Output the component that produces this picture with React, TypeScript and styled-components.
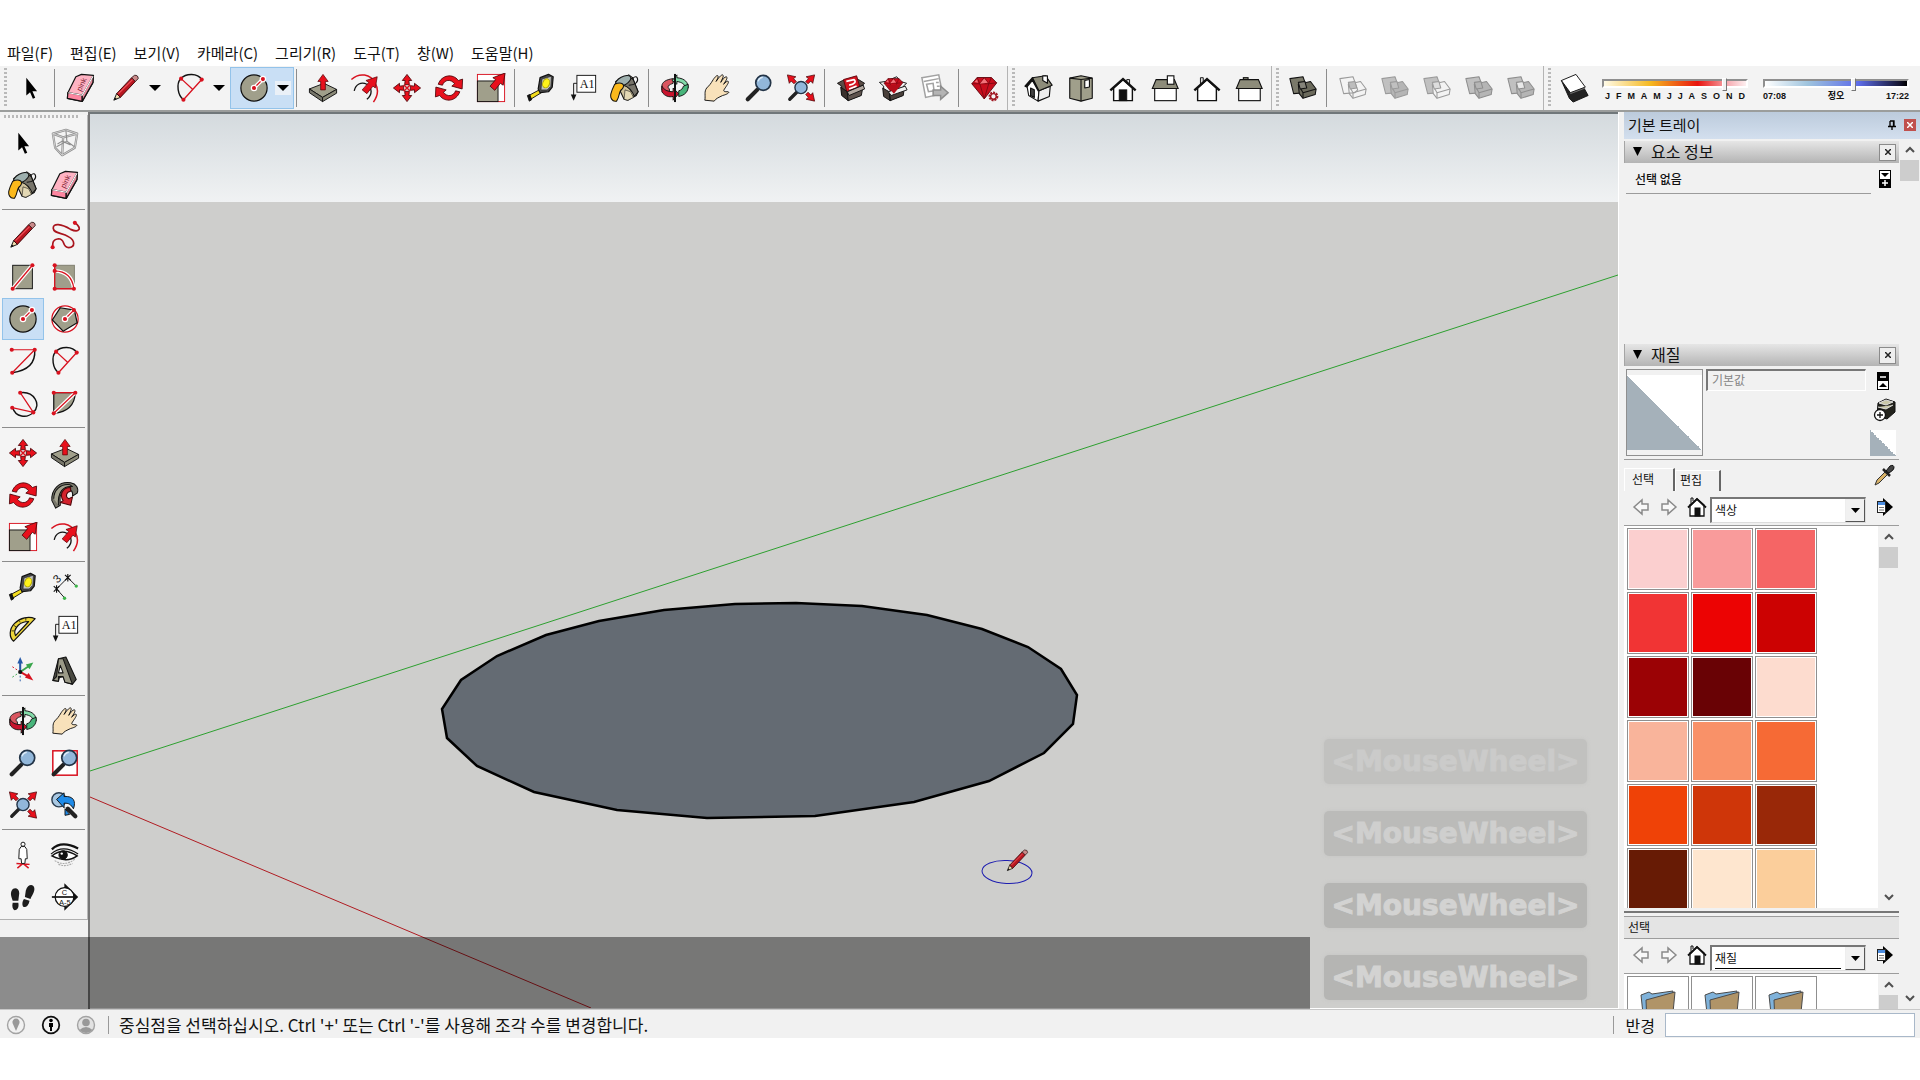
import React from "react";
import styled, { createGlobalStyle, css } from "styled-components";

const RED = "#d8121f";
const CLAY = "#a09f8b";
const INK = "#111";

const Global = createGlobalStyle`
  *, *::before, *::after { box-sizing: border-box; }
  html, body { margin: 0; background: #fff; }
  body, button, input, select {
    font-family: "Noto Sans CJK KR", "Liberation Sans", sans-serif;
    color: #111;
  }
  button { padding: 0; border: 0; background: none; }
  svg { display: block; }
`;

/* ---------- icon artwork, 32 x 32 ---------- */

const Dot = ({ x, y }: { x: number; y: number }) => <circle cx={x} cy={y} r="2.2" fill={RED} />;

const pencil = (
  <g strokeLinejoin="round">
    <path d="M3 29 L6 22 L10 26 Z" fill="#f0dcae" stroke={INK} />
    <path d="M6 22 L22 5 L26 9 L10 26 Z" fill="#b81620" stroke="#3a0508" />
    <path d="M8 22 L23 7" stroke="#f0545a" strokeWidth="1.2" />
    <path d="M22 5 L25 2.5 Q29 2 29 6 L26 9 Z" fill="#c98a8a" stroke="#3a2020" />
    <path d="M3 29 L4.4 26 L6.2 27.6 Z" fill={INK} />
  </g>
);
const eraser = (
  <g stroke={INK} strokeWidth="1.3" strokeLinejoin="round">
    <path d="M2 21 L10.5 4 L16.5 1.5 L29.3 2.5 L28.7 10.3 L17.3 30.3 L1.5 27 Z" fill="#ffb3c3" />
    <path d="M2 21 L17.3 23.7 L17.3 30.3 L1.5 27 Z" fill="#fd86a0" />
    <path d="M17.3 23.7 L29 3 L28.7 10.3 L17.3 30.3 Z" fill="#e78a9c" />
    <path d="M2.5 21 L17.3 23.7 L28.8 3.4" fill="none" stroke="#fff" strokeWidth="1.2" />
    <text x="0" y="0" transform="translate(16 20) rotate(-65)" fontSize="8" fontFamily="Liberation Sans" stroke="none" fill="#7a2030">pink</text>
  </g>
);
const push = (
  <g strokeLinejoin="round">
    <path d="M1.5 17 L17 11 L30.5 17.5 L15.5 26 Z" fill={CLAY} stroke={INK} />
    <path d="M1.5 17 L15.5 26 L15.5 30.5 L1.5 21 Z" fill="#77766a" stroke={INK} />
    <path d="M15.5 26 L30.5 17.5 L30.5 21.5 L15.5 30.5 Z" fill="#8b8a78" stroke={INK} />
    <path d="M16 1.5 L21.5 9 L18.5 9 L18.5 18 L13.5 18 L13.5 9 L10.5 9 Z" fill="#e8101c" stroke="#5a0508" strokeWidth=".8" />
  </g>
);
const offset = (
  <g fill="none" strokeWidth="1.6">
    <path d="M1.5 7 C10 -1 22 1 27 11 C31 18 30 24 25 31" stroke={RED} />
    <path d="M4.5 19 C6 12 12 9 18 12 C24 16 24 23 18 28" stroke={INK} strokeWidth="1.4" />
    <path d="M13 18 L20 10 L17 8 L29 4 L27 16 L24.5 14 L18 22 Z" fill="#e8101c" stroke="#5a0508" strokeWidth=".8" />
  </g>
);
const move = (
  <g fill="#e8101c" stroke="#4a0508" strokeWidth=".9" strokeLinejoin="round">
    {[0, 90, 180, 270].map((a) => (
      <path key={a} transform={`rotate(${a} 16 16)`} d="M16 1.5 L21 8 L18 8 L18.5 12.5 L13.5 12.5 L14 8 L11 8 Z" />
    ))}
    <path d="M12.5 12.5 L19.5 19.5 M19.5 12.5 L12.5 19.5" stroke={RED} strokeWidth="1.6" />
  </g>
);
const rotate = (
  <g fill="#e8101c" stroke="#4a0508" strokeWidth=".9" strokeLinejoin="round">
    {[0, 180].map((a) => (
      <path key={a} transform={`rotate(${a} 16 16)`} d="M4.5 12 C8 2 20 0 26 8 L30.5 6.5 L30 17 L19 14 L22 11.5 C18 6 11 7 9 13 Z" />
    ))}
  </g>
);
const scale = (
  <g>
    <rect x="1.5" y="1.5" width="29" height="29" fill="#fff" stroke={RED} />
    <rect x="1.5" y="8.5" width="22" height="22" fill={CLAY} stroke={INK} />
    <path d="M15 14 L21 7 L18 5 L31 0 L29 13 L26 11 L20 18.5 Z" fill="#e8101c" stroke="#4a0508" strokeWidth=".9" />
  </g>
);
const tape = (
  <g stroke={INK} strokeLinejoin="round">
    <path d="M3 24 L16 17 L18 20 L5 28 Z" fill="#f2dc1e" />
    <path d="M1.5 24 L4 23 L6 28.5 L3.5 30 Z" fill={INK} />
    <path d="M15 5 L24 1.5 L29 4 L28 15 L24 20 L15 21 L13 17 Z" fill="#4b4b4b" strokeWidth="1.3" />
    <path d="M17 6.5 L27 3.5 L26.5 14 L22.5 18 L16 18 Z" fill="#c4c4c4" strokeWidth=".6" />
    <ellipse cx="21.5" cy="11" rx="3.6" ry="5" fill="#fff21a" stroke="#b0a600" transform="rotate(20 21.5 11)" />
  </g>
);
const label = (
  <g>
    <rect x="9.5" y="2.5" width="20" height="18" fill="#fff" stroke={INK} />
    <text x="12.5" y="16" fontSize="13" fontFamily="Liberation Serif" fill={INK}>A1</text>
    <path d="M9.5 11 H6 V24" fill="none" stroke={INK} />
    <path d="M3 23 H9 L6 29.5 Z" fill={INK} />
  </g>
);
const bucket = (
  <g stroke={INK} strokeWidth="1.1" strokeLinejoin="round">
    <path d="M6 9 L20 2 L24 5 L30 20 L28 24 L19 29 L15 28 Z" fill="#cfc29c" />
    <path d="M14 13 L24 5 L30 20 L26 25 Q22 15 14 13 Z" fill="#77746a" />
    <path d="M15 28 L16 18 L22 20 L25 26 L19 29 Z" fill="#e3d8b4" strokeWidth=".6" />
    <ellipse cx="14" cy="8.5" rx="9" ry="4.5" fill="#9eb0ae" transform="rotate(-28 14 8.5)" />
    <path d="M20 13 C27 13 31 9 29 5 C28 3 25 4 24 7" fill="none" />
    <path d="M5 12 C12 9 17 12 13 17 C9 19 11 24 7 30 C2 31 0 26 1 22 C2 18 3 16 5 12 Z" fill="#fbb91c" />
  </g>
);
const orbit = (
  <g stroke={INK} strokeWidth="1" strokeLinejoin="round">
    <path d="M14 6 C6 7 2 10 2 14 L2 18 C4 21 6 22 10 23 L10 17 C9 16 8 15 9 14 C10 12 12 12 14 11 Z" fill="#d95660" />
    <path d="M2 14 L2 20 C5 25 10 26 14 25 L14 29 L20 22 L14 16 L14 20 C8 20 4 18 2 14 Z" fill="#c8142d" />
    <path d="M18 2 L13 8 L18 12 L18 9 C24 10 26 12 27 15 L30 16 C30 10 27 6 18 5 Z" fill="#83dba9" />
    <path d="M30 12 C31 20 26 24 20 25 L20 19 C23 18 24 17 25 14 Z" fill="#48b57b" />
    <path d="M16 1 V31" strokeWidth="2.2" />
  </g>
);
const hand = (
  <path
    d="M3 29 C4 24 2 20 5 16 C8 13 9 12 12 7 C14 4 16 2 17 3 C18 4 16 7 15 9 C18 5 20 2 22 2 C24 3 21 7 20 10 C22 7 24 4 26 4 C28 5 25 9 23 12 C25 10 27 8 28 9 C29 10 26 14 24 17 C22 20 24 20 28 20 C30 21 26 23 22 24 C18 26 15 27 13 30 Z"
    fill="#f8e1ba" stroke={INK} strokeWidth="1" strokeLinejoin="round"
  />
);
const lens = (
  <g>
    <path d="M4 28 L14 18" stroke="#222" strokeWidth="4.5" strokeLinecap="round" />
    <circle cx="20.5" cy="10.5" r="8" fill="#92b7da" stroke="#233447" strokeWidth="1.8" />
    <path d="M15 9 Q16 5 20 4.5" fill="none" stroke="#dcebf8" strokeWidth="1.5" />
  </g>
);
const corner = "M0 0 L9 2 L6.5 4 L9.5 7 L7 9.5 L4 6.5 L2 9 Z";
const extents = (
  <g>
    <path d="M4 28 L12 20" stroke="#222" strokeWidth="3.5" strokeLinecap="round" />
    <g fill="#e8101c" stroke="#4a0508" strokeWidth=".8">
      <path d={corner} transform="translate(1.5 2)" />
      <path d={corner} transform="translate(30.5 2) rotate(90)" />
      <path d={corner} transform="translate(30.5 30) rotate(180)" />
    </g>
    <circle cx="16" cy="15.5" r="6.5" fill="#92b7da" stroke="#233447" strokeWidth="1.5" />
  </g>
);
const crateBack = <path d="M6 14 L1.5 11 L7 8 L24 7 L30.5 11 L27 14 L26 24 L13 29 L6 23 Z" fill="#5b4c46" stroke={INK} strokeLinejoin="round" />;
const crateFront = (
  <g stroke={INK} strokeLinejoin="round">
    <path d="M5 15 L12 20 L13 29.500 L6 24 Z" fill="#39302c" />
    <path d="M12 20 L29 13 L27 24 L13 29.500 Z" fill="#5e534d" />
    <path d="M12 20 L29 13 L30.500 17 L14 24 Z" fill="#b3a8a0" />
  </g>
);
const gem = (s = "") => (
  <g transform={s} strokeLinejoin="round">
    <path d="M2 11 L8 4 L24 4 L30 10 L16 28 Z" fill="#c80d1d" stroke="#5c060d" />
    <path d="M2 11 L11 11 L16 28 M30 10 L21 11 L16 28 M11 11 L21 11 M8 4 L11 11 L16 4 L21 11 L24 4" fill="none" stroke="#7c0812" />
    <path d="M11 11 L16 5 L20 10 Z M5 9 L8 6 L9 10 Z" fill="#f2747c" />
  </g>
);
const house = (
  <g stroke={INK} strokeWidth="1.2" strokeLinejoin="round">
    <path d="M3 13 L9 6 L16 19 L15 30 L5 24 Z" fill="#fff" />
    <path d="M16 19 L28 14 L27 25 L15 30 Z" fill="#eee" />
    <path d="M9 5 L23 3 L30 13 L16 19 Z" fill="#8d8c7a" />
    <path d="M9 5 L1 14 L3 15 L9 8 L15 19 Z" fill={INK} />
    <path d="M20 3 H25 V11 L20 8 Z" fill="#fff" />
    <path d="M7 16 L11 18 V26 L7 24 Z" fill="#444" />
  </g>
);
const gable = (door: boolean) => (
  <g stroke={INK} strokeLinejoin="miter">
    <path d="M6 16 L16 7 L26 16 V29.5 H6 Z" fill="#fff" strokeWidth="1.5" />
    {door ? <path d="M20 10 V7 H23 V13" fill="#ddd" /> : <path d="M9 13 V5 H12 V9" fill="#ddd" />}
    <path d="M2.5 18.5 L16 6.5 L29.5 18.5" fill="none" strokeWidth="2.6" />
    {door && <rect x="12" y="18" width="8" height="11.5" fill={INK} />}
  </g>
);
const side = (tall: boolean) => (
  <g stroke={INK} strokeWidth="1.2">
    <rect x="5" y="15" width="23" height="14.5" fill="#fff" />
    {!tall && <rect x="10" y="5" width="5" height="4" fill="#8d8c7a" />}
    <path d="M2.5 16.5 L6.500 7 H26 L30 16.5 Z" fill="#8d8c7a" />
    {tall && <rect x="18.5" y="3" width="7" height="9" fill="#fff" />}
  </g>
);
const solids = (a: string, b: string, mid: string, line: string) => (
  <g stroke={line} strokeLinejoin="round" strokeWidth="1.1">
    <path d="M2 6 L16 4 L21 18 L18 21 L6 22 Z" fill={a} />
    <path d="M11 12 L24 9 L30 17 L29 23 L16 27 L12 22 Z" fill={b} />
    <path d="M30 17 L16 21 L11 12 M16 21 V27" fill="none" />
    <path d="M11 10 L18 9 L20 16 L13 17 Z" fill={mid} />
  </g>
);

const icons: Record<string, React.ReactNode> = {
  select: <path d="M11 5 V24 L15 20.5 L18 27.5 L20.5 26.5 L17.5 19.5 H22.5 Z" fill="#000" />,
  component: (
    <g fill="none" stroke="#8e8e8e" strokeWidth="2.4" strokeLinejoin="round">
      <path d="M3 6 L17 2 L29 6 L26.5 21 L13 29 L5.5 21 Z M3 6 L14 10 L29 6 M14 10 L13 29" />
      <path d="M3 6 L17 2 L29 6 L26.5 21 L13 29 L5.5 21 Z M3 6 L14 10 L29 6 M14 10 L13 29" stroke="#e3e3e3" strokeWidth=".8" />
      <path d="M8 17 L13 14 L22 18 M17 3 L18 14 L26 20 M18 14 L7 20" strokeWidth="1.2" />
    </g>
  ),
  bucket, eraser, pencil, push, offset, move, rotate, scale, tape, label, orbit, hand, lens, extents, house,
  freehand: (
    <g>
      <path d="M26.5 3 C35 9 31 14 22 10 C12 4 3 3 3.5 9 C4 15 13 13 20 18 C27 22 27 29 20 29.5 C12 29 17 20 9 20 C2 21 3 25 2.8 29" fill="none" stroke="#a9141d" strokeWidth="1.8" />
      <Dot x={26.5} y={3} /><Dot x={2.8} y={29} />
    </g>
  ),
  rectangle: (
    <g>
      <rect x="5" y="3.5" width="21" height="25" fill={CLAY} stroke={INK} />
      <path d="M5 28.5 L26 3.5" stroke="#fff" strokeWidth="4" /><path d="M5 28.5 L26 3.5" stroke={RED} strokeWidth="1.4" />
      <Dot x={5} y={28.5} /><Dot x={26} y={3.5} />
    </g>
  ),
  rotrect: (
    <g>
      <rect x="5" y="3.5" width="21" height="25" fill={CLAY} stroke="#7d7c6c" />
      <path d="M5 9.5 Q23 10 25.5 28.5" fill="none" stroke="#fff" strokeWidth="4" />
      <path d="M5 3.5 V28.5 H25.5 Q23 10 5 9.5" fill="none" stroke={RED} strokeWidth="1.4" />
      <Dot x={5} y={3.5} /><Dot x={5} y={9.5} /><Dot x={5} y={28.5} /><Dot x={25.5} y={28.5} />
    </g>
  ),
  circle: (
    <g>
      <circle cx="16" cy="16" r="14" fill={CLAY} stroke={INK} strokeWidth="1.3" />
      <path d="M16 16 L25.5 6.5" stroke="#fff" strokeWidth="4" /><path d="M16 16 L25.5 6.5" stroke={RED} strokeWidth="1.4" />
      <circle cx="16" cy="16" r="3.5" fill="#fff" /><circle cx="25.5" cy="6.5" r="3.5" fill="#fff" />
      <Dot x={16} y={16} /><Dot x={25.5} y={6.5} />
    </g>
  ),
  polygon: (
    <g>
      <circle cx="16" cy="16" r="14" fill="#fff" stroke={RED} strokeWidth="1.3" />
      <path d="M11 4 L26 6.5 L29 20 L14 29 L2.5 17 Z" fill={CLAY} stroke={INK} strokeWidth="1.3" />
      <path d="M16 16 L25.5 6.5" stroke="#fff" strokeWidth="4" /><path d="M16 16 L25.5 6.5" stroke={RED} strokeWidth="1.4" />
      <circle cx="16" cy="16" r="3.5" fill="#fff" />
      <Dot x={16} y={16} /><Dot x={25.5} y={6.5} />
    </g>
  ),
  arc: (
    <g fill="none">
      <path d="M28.5 4 Q30 25 4.5 28.5" stroke={INK} strokeWidth="1.5" />
      <path d="M4 4 H28.5 L4.5 28.5" stroke={RED} strokeWidth="1.3" />
      <Dot x={4} y={4} /><Dot x={28.5} y={4} /><Dot x={4.5} y={28.5} />
    </g>
  ),
  arc2: (
    <g fill="none">
      <path d="M28.5 7 C24 0 12 0 6 6 C1 12 3 24 9 28.5" stroke={INK} strokeWidth="1.5" />
      <path d="M28.5 7 L9 28.5 M6.5 6 L19 17.5" stroke={RED} strokeWidth="1.4" />
      <Dot x={6.5} y={6} /><Dot x={28.5} y={7} /><Dot x={9} y={28.5} />
    </g>
  ),
  arc3: (
    <g fill="none">
      <path d="M13 5 C28 3 36 18 27 26 C20 33 8 31 5 21" stroke={INK} strokeWidth="1.5" />
      <path d="M13 5 L27 26 L4.5 21" stroke={RED} strokeWidth="1.3" />
      <Dot x={13} y={5} /><Dot x={27} y={26} /><Dot x={4.5} y={21} />
    </g>
  ),
  pie: (
    <g>
      <path d="M4 5 H27 Q26 25 4 27 Z" fill={CLAY} stroke={INK} strokeWidth="1.3" />
      <path d="M4 27 L27 5" stroke="#fff" strokeWidth="4" /><path d="M4 27 L27 5 H4" fill="none" stroke={RED} strokeWidth="1.4" />
      <Dot x={4} y={5} /><Dot x={27} y={5} /><Dot x={4} y={27} />
    </g>
  ),
  follow: (
    <g stroke={INK} strokeWidth="1.1" strokeLinejoin="round">
      <path d="M2 22 C1 10 10 1 22 3 C28 4 31 9 29 14 L24 17 C25 11 20 8 15 11 C9 15 11 21 11 27 L6 30 Z" fill="#77766a" />
      <path d="M4 20 C4 11 11 4 21 5 L24 7 C14 6 8 13 9 27" fill="#a4a390" />
      <path d="M22 8 C13 8 10 16 14 22 L11 24 L22 27 L24 18 L20 20 C16 18 17 13 22 12 Z" fill="#d3222c" stroke="#4a0508" />
    </g>
  ),
  dimension: (
    <g stroke={INK} fill="none">
      <path d="M7 18 L19 6 M7 18 L15 27 M19 6 L27 14" />
      <path d="M4 15 L10 21 M10 15 L4 21 M7 14 V22 M16 3 L22 9 M22 3 L16 9 M19 2 V10" strokeWidth="1.2" />
      <text x="4" y="11" transform="rotate(-45 8 7)" fontSize="12" fontFamily="Liberation Sans" fill={INK} stroke="none">3</text>
      <circle cx="15.5" cy="28" r="1.8" fill="#3db54a" stroke="none" /><circle cx="28" cy="15" r="1.8" fill="#3db54a" stroke="none" />
    </g>
  ),
  protractor: (
    <g stroke={INK} strokeWidth="1.3" strokeLinejoin="round">
      <path d="M29 5 L6 29 C1 25 1 16 7 10 C13 4 22 2 29 5 Z" fill="#ecd53a" />
      <path d="M22 8 L8 23 C6 19 8 15 11 12 C14 9 18 8 22 8 Z" fill="#f3f3f3" />
      <path d="M4 18 L7 18 M6 12 L9 14 M12 7 L13 9 M19 4 V7" strokeWidth=".8" />
    </g>
  ),
  axes: (
    <g>
      <path d="M13 17 V6" stroke="#2559a8" strokeWidth="2.2" /><path d="M13 1 L16 8 H10 Z" fill="#2559a8" />
      <path d="M13 17 L22 11" stroke="#3aa64c" strokeWidth="2" /><path d="M27 7 L23 14 L19 9 Z" fill="#3aa64c" />
      <path d="M13 17 L22 22" stroke={RED} strokeWidth="2" /><path d="M27 26 L18 23 L22 18 Z" fill={RED} />
      <path d="M13 17 L4 11" stroke={RED} strokeDasharray="2 2" /><path d="M13 17 V28" stroke="#2559a8" strokeDasharray="2 2" /><path d="M13 17 L4 23" stroke="#3aa64c" strokeDasharray="2 2" />
      <circle cx="13" cy="17" r="2.2" fill={INK} />
    </g>
  ),
  text3d: (
    <g stroke={INK} strokeLinejoin="round" strokeWidth="1.1">
      <path d="M9 3 L17 1 L28 25 L24 30 L16 28 L14 22 L10 23 L9 27 L3 26 Z" fill="#4a4a42" />
      <path d="M9 3 L14 3 L22 25 L24 30 L16 28 L14 22 L9 22 L9 27 L3 26 L7 22 Z" fill="#9b9a88" />
      <path d="M11 10 L14 18 L9 18 Z" fill="#f1f1f1" />
    </g>
  ),
  zoomwin: (<g><rect x="3" y="3" width="26" height="26" fill="#fff" stroke={RED} strokeWidth="1.6" />{lens}</g>),
  previous: (
    <g strokeLinejoin="round">
      <circle cx="9.5" cy="10.5" r="7.5" fill="#a9c8e2" stroke="#2b3d50" strokeWidth="1.5" />
      <path d="M19 20 L27 28" stroke="#222" strokeWidth="4.5" strokeLinecap="round" />
      <path d="M7 10 L15 3 L15 7 C25 6 28 12 25 20 C22 15 20 14 15 14 L15 19 Z" fill="#1f8be8" stroke={INK} />
      <path d="M16 20 L21 26 L16 27 Z" fill="#1f8be8" stroke={INK} />
    </g>
  ),
  camera: (
    <g fill="none" stroke={INK}>
      <path d="M10 30 L16 25 L22 30 M9 25 L23 26" stroke={RED} strokeWidth="1.6" />
      <circle cx="16" cy="4.5" r="2.2" fill="#fff" />
      <path d="M14 7 L12 10 L11.5 20 H14 L14.5 25 H18 L18.5 20 H20.5 L20 10 L18 7 Z" fill="#fff" />
    </g>
  ),
  eye: (
    <g fill="none" stroke={INK}>
      <path d="M2 10 Q12 0 30 9" strokeWidth="2.4" /><path d="M2 17 Q14 7 29 17 Q18 25 2 17 Z" fill="#fff" strokeWidth="1.5" />
      <path d="M1 15 Q14 4 30 15" strokeWidth="1.2" />
      <circle cx="14" cy="16" r="4.5" fill={INK} /><circle cx="12.5" cy="14.5" r="1.3" fill="#fff" stroke="none" />
      <path d="M5 22 Q16 29 27 20 M9 26 Q17 29 24 25" stroke="#aaa" strokeWidth="1.2" strokeDasharray="2 1" />
    </g>
  ),
  walk: (
    <g fill="#1c1c1c">
      <path d="M4 9 C6 5 12 6 12 12 L11 20 L5 20 C4 16 2 13 4 9 Z M5 22 L11 22 C12 27 10 30 7 30 C5 29 4 26 5 22 Z" />
      <path d="M19 9 C21 2 27 2 28 6 C29 10 25 15 24 18 L18 16 Z M17 18 L23 20 C22 26 18 28 16 26 C15 24 15 21 17 18 Z" />
    </g>
  ),
  section: (
    <g fill="none" stroke={INK} strokeWidth="1.4">
      <path d="M16 3 L29 16 L16 29 Z" fill={INK} />
      <circle cx="15.5" cy="16" r="10" fill="#fff" />
      <path d="M2 16 H29" strokeWidth="1.8" />
      <g fontSize="8" fontFamily="Liberation Sans" fill={INK} stroke="none"><text x="12.5" y="14">C</text><text x="9.500" y="24">A-5</text></g>
    </g>
  ),
  warehouse: (
    <g>{crateBack}
      <path d="M8 7 L22 3 L26 17 L12 22 Z" fill="#d3131f" stroke="#5c060d" />
      <path d="M11 9 L19 7 C22 9 20 12 14 13 M14 17 L22 14" stroke="#fff" strokeWidth="1.8" fill="none" />
      {crateFront}
    </g>
  ),
  extwarehouse: (
    <g>
      <path d="M6 14 L1.5 10 L8 9 L20 4 L24 9 L30.500 11 L27 14 L26 24 L13 29 L6 23 Z" fill="#f6f6f6" stroke={INK} strokeLinejoin="round" />
      {gem("translate(5 3) scale(.72)")}
      <path d="M5 16 L12 20 L13 29.500 L6 25 Z M12 20 L28 15 L27 24 L13 29.500 Z" fill="#4a403b" stroke={INK} />
      <path d="M11 20 L29 14 L31 18 L14 24 Z" fill="#f0f0f0" stroke={INK} />
      <path d="M9 13 L25 12 L17 22 Z" fill="#b50d1a" />
    </g>
  ),
  layout: (
    <g stroke="#a2a2a2" fill="#fff" strokeWidth="1.6">
      <path d="M2 5 L20 2 L24 22 L6 26 Z" /><path d="M4 9 L20 6 M7 12 L14 11 L15 19 L9 20 Z M17 10 H20 M18 14 H21" />
      <path d="M14 18 H22 V14 L30 21 L22 28 V24 H14 Z" fill="#b4b4b4" stroke="#8d8d8d" />
    </g>
  ),
  extmanager: (<g>{gem("translate(0 1) scale(.95)")}<circle cx="25" cy="25" r="4" fill="#f3f3f3" stroke="#a01822" strokeWidth="2.5" strokeDasharray="2 1" /><circle cx="25" cy="25" r="3" fill="none" stroke="#a01822" strokeWidth="1.5" /></g>),
  top: (
    <g stroke={INK} strokeLinejoin="round" strokeWidth="1.2">
      <path d="M4 5.5 L16 3 L28 5.5 V27 L16 30 L4 27 Z" fill={CLAY} /><path d="M16 7 V30 M4 5.5 L16 7 L28 5.5" fill="none" />
      <path d="M20 8 L25 7 V15 L20 16 Z" fill="#fff" />
    </g>
  ),
  front: gable(true),
  right: side(true),
  back: gable(false),
  left: side(false),
  outer: solids("#7a796a", "#6b6a5c", "#85847a", INK),
  intersect: solids("none", "none", "#bdbdbd", "#9a9a9a"),
  union: solids("#c0c0c0", "#b5b5b5", "#c0c0c0", "#9a9a9a"),
  subtract: solids("#c0c0c0", "#f3f3f3", "#ddd", "#9a9a9a"),
  trim: solids("#c0c0c0", "#b5b5b5", "#b5b5b5", "#8e8e8e"),
  split: solids("#c0c0c0", "#b5b5b5", "#e9e9e9", "#8e8e8e"),
  shadow: (
    <g strokeLinejoin="round">
      <path d="M1.5 8 L10 27 L14 31 L30 24 L25 15 Z" fill="#222" stroke="#111" />
      <path d="M1.5 8 L17 1.5 L27 15 L11 21 Z" fill="#fff" stroke="#111" />
      <path d="M11 22 L27 16" stroke="#777" />
    </g>
  ),
  prev: <path d="M9 16 L17 9 V13 H23 V19 H17 V23 Z" fill="#f8f8f8" stroke="#8a8a8a" strokeWidth="1.5" />,
  next: <path d="M23 16 L15 9 V13 H9 V19 H15 V23 Z" fill="#f8f8f8" stroke="#8a8a8a" strokeWidth="1.5" />,
  home: (
    <g stroke={INK}>
      <path d="M10 14 L16 8 L23 14 V25 H9 V14 Z" fill="#fff" strokeWidth="1.3" /><path d="M10 13 V7 H12 V10" fill="none" />
      <path d="M7 16.5 L16 8 L25 16.5" fill="none" strokeWidth="1.8" /><rect x="14" y="17" width="5" height="8" fill={INK} />
    </g>
  ),
  details: (
    <g><path d="M15 7 L25 16 L15 25 Z" fill="#000" /><rect x="9.5" y="10.5" width="8" height="11" fill="#fff" stroke="#222" /><path d="M10 12.5 H17" stroke="#4c8de0" strokeWidth="3" /><path d="M11 16.5 H16 M11 19 H16" stroke="#777" /></g>
  ),
  dropper: (
    <g strokeLinejoin="round"><path d="M7 26 L9 21 L18 12 L20.5 14.5 L11 24 Z" fill="#d8b268" stroke="#333" /><path d="M15 10 L22 17" stroke="#222" strokeWidth="2.5" /><path d="M18 12 L22 7 Q26 5 26 9 Q26 11 21 14 Z" fill="#444" stroke="#111" /></g>
  ),
  addmat: (
    <g stroke={INK} strokeLinejoin="round"><path d="M9 9 L17 5 L26 8 V18 L18 25 L8 22 Z" fill="#22221c" /><path d="M10 9 L17 6 L24 8 L17 11 Z M9 13 L17 15 L24 11" fill="#c9c7a8" stroke="#ddd" /><circle cx="11" cy="21" r="5.5" fill="#fff" strokeWidth="1.3" /><path d="M8 21 H14 M11 18 V24" strokeWidth="1.3" /></g>
  ),
};

const Icon = ({ name, size = 30 }: { name: string; size?: number }) => (
  <svg width={size} height={size} viewBox="0 0 32 32" aria-hidden="true">{icons[name]}</svg>
);

/* ---------- frame ---------- */

const Page = styled.div`
  display: flex;
  flex-direction: column;
  height: 100vh;
  padding: 40px 0 42px;
  background: #fff;
`;
const MenuBar = styled.nav`
  display: flex;
  flex: none;
  gap: 17px;
  height: 26px;
  padding-left: 7px;
`;
const MenuItem = styled.button`
  font-size: 15px;
  line-height: 26px;
  white-space: nowrap;
`;
const Toolbar = styled.div`
  display: flex;
  flex: none;
  align-items: stretch;
  height: 46px;
  background: #f3f3f3;
  border-bottom: 2px solid #9b9d9c;
`;
const Group = styled.div`
  display: flex;
  align-items: center;
  padding-right: 1px;
  border-right: 1px solid #b4b4b4;
`;
const Grip = styled.span<{ $wide?: boolean }>`
  ${(p) => p.$wide
    ? css`display: block; height: 3px; margin: 3px 6px 4px 2px; background: repeating-linear-gradient(90deg, #b9b9b9 0 2px, transparent 2px 4px);`
    : css`width: 3px; height: 40px; margin: 0 3px 0 4px; background: repeating-linear-gradient(180deg, #b9b9b9 0 2px, transparent 2px 4px);`}
`;
const Tool = styled.button<{ $on?: boolean }>`
  display: grid;
  place-items: center;
  width: 42px;
  height: 42px;
  border: 1px solid ${(p) => (p.$on ? "#93c3ea" : "transparent")};
  background: ${(p) => (p.$on ? "#c9dff5" : "transparent")};
`;
const Split = styled.div<{ $on?: boolean }>`
  display: flex;
  align-items: center;
  width: 64px;
  height: 42px;
  padding-left: 2px;
  border: 1px solid ${(p) => (p.$on ? "#93c3ea" : "transparent")};
  background: ${(p) => (p.$on ? "#c9dff5" : "transparent")};
`;
const SplitMain = styled.button`
  display: grid;
  place-items: center;
  width: 42px;
`;
const SplitArrow = styled.button<{ $on?: boolean }>`
  display: grid;
  place-items: center;
  width: 16px;
  height: 14px;
  background: ${(p) => (p.$on ? "#eaf0f7" : "transparent")};
`;
const Divider = styled.span`
  width: 1px;
  height: 38px;
  margin: 0 5px 0 2px;
  background: #8c8c8c;
`;
const ShadowBar = styled.div`
  display: flex;
  flex: 1;
  align-items: center;
`;
const ShadowPanel = styled.div`
  display: flex;
  align-items: center;
  gap: 15px;
  margin-left: auto;
  padding: 2px 11px 0 0;
`;
const RangeBlock = styled.div`
  display: flex;
  flex-direction: column;
  width: 146px;
  font: bold 9px/12px "Liberation Sans", "Noto Sans CJK KR", sans-serif;
`;
const Range = styled.input<{ $track: string }>`
  appearance: none;
  width: 100%;
  height: 13px;
  margin: 0;
  background: none;
  &::-webkit-slider-runnable-track {
    height: 9px;
    border: 2px solid;
    border-color: #8f8f8f #fff #fff #8f8f8f;
    background: linear-gradient(90deg, ${(p) => p.$track});
  }
  &::-webkit-slider-thumb {
    appearance: none;
    width: 5px;
    height: 13px;
    margin-top: -3px;
    border: 1px solid;
    border-color: #fff #777 #777 #fff;
    background: #f1f1f1;
  }
`;
const Ticks = styled.div`
  display: flex;
  justify-content: space-between;
  padding: 0 3px;
`;
const Times = styled(Ticks)`
  padding: 0;
`;

const Workspace = styled.div`
  position: relative;
  display: flex;
  flex: 1;
  min-height: 0;
  background: #f1f1f1;
`;
const ToolBox = styled.aside`
  width: 90px;
  flex: none;
  overflow: hidden;
  border-right: 2px solid #777;
`;
const ToolGrid = styled.div`
  width: 88px;
  padding: 0 2px 1px;
  background: #f4f4f4;
  border-right: 1px solid #b8b8b8;
  border-bottom: 1px solid #b0b0b0;
`;
const ToolSet = styled.div`
  display: grid;
  grid-template-columns: 42px 42px;
  & + & {
    margin-top: 3px;
    padding-top: 4px;
    border-top: 1px solid #8c8c8c;
  }
`;
const Viewport = styled.main`
  position: relative;
  flex: 1;
  min-width: 0;
  border-top: 2px solid #70777a;
  border-bottom: 1px solid #fff;
  background: #cececc;
`;
const Scene = styled.svg`
  width: 100%;
  height: 100%;
`;
const KeyLog = styled.div`
  position: absolute;
  right: 31px;
  bottom: 8px;
  display: flex;
  flex-direction: column;
  gap: 27px;
`;
const KeyBadge = styled.div<{ $level: number }>`
  width: 263px;
  border-radius: 5px;
  text-align: center;
  font: bold 28px/45px "DejaVu Sans", sans-serif;
  -webkit-text-stroke: 1px currentColor;
  color: ${(p) => ["#cbcbca", "#cfcfce", "#d3d3d2", "#d3d3d2"][p.$level]};
  background: ${(p) => ["#c1c1bf", "#bbbbb9", "#b5b5b3", "#b5b5b3"][p.$level]};
  box-shadow: 0 0 4px #c4c4c2;
`;
const Shade = styled.div`
  position: absolute;
  left: 0;
  bottom: 0;
  width: 68.23%;
  height: 72px;
  background: rgba(0, 0, 0, 0.42);
`;

/* ---------- tray ---------- */

const Tray = styled.aside`
  display: flex;
  flex-direction: column;
  flex: none;
  width: 302px;
  padding-left: 5px;
  overflow: hidden;
  border-left: 1px solid #fff;
`;
const TrayTitle = styled.header`
  display: flex;
  align-items: center;
  flex: none;
  height: 27px;
  padding: 0 4px 2px 4px;
  background: linear-gradient(#bccbdc, #d3dfee);
  font-size: 15px;
  line-height: 22px;
`;
const Grow = styled.span`
  flex: 1;
`;
const TrayClose = styled.button`
  display: grid;
  place-items: center;
  width: 12px;
  height: 12px;
  margin-left: 8px;
  background: #c0504d;
`;
const TrayBody = styled.div`
  display: flex;
  flex: 1;
  min-height: 0;
`;
const Sections = styled.div`
  flex: 1;
  overflow: hidden;
  padding-top: 2px;
`;
const SectionHead = styled.h2`
  display: flex;
  align-items: center;
  height: 22px;
  margin: 0;
  padding: 0 3px 0 8px;
  border-left: 1px solid #a5a5a5;
  background: linear-gradient(#e6e6e6, #b4b4b4);
  font-size: 16px;
  font-weight: 400;
`;
const HeadToggle = styled.button`
  display: flex;
  align-items: center;
  gap: 9px;
  padding-bottom: 2px;
  font-size: 16px;
  line-height: 20px;
`;
const HeadClose = styled.button`
  display: grid;
  place-items: center;
  width: 17px;
  height: 17px;
  border: 1px solid #8b8b8b;
  background: #eee;
`;
const Info = styled.div`
  display: flex;
  height: 181px;
  padding: 4px 8px 0 2px;
`;
const InfoText = styled.p`
  flex: 1;
  height: 27px;
  margin: 0 8px 0 0;
  padding-left: 9px;
  border-bottom: 1px solid #9c9c9c;
  font-size: 12px;
  font-weight: 500;
  line-height: 24px;
`;
const FlipBox = styled.div`
  padding-top: 3px;
`;
const Flip = styled.button<{ $up?: boolean }>`
  display: flex;
  flex-direction: ${(p) => (p.$up ? "column-reverse" : "column")};
  width: 12px;
  height: 18px;
  border: 1px solid #000;
  background: #fff;
  svg:last-child { background: #000; }
`;
const MaterialHead = styled.div`
  display: flex;
  height: 94px;
  padding: 3px 2px 0;
  gap: 3px;
  border-bottom: 1px solid #9c9c9c;
`;
const Preview = styled.div`
  width: 77px;
  height: 87px;
  padding: 5px 0;
  border: 1px solid #8f8f8f;
`;
const Fold = styled.span<{ $small?: boolean }>`
  display: block;
  width: ${(p) => (p.$small ? "26px" : "100%")};
  height: ${(p) => (p.$small ? "26px" : "100%")};
  background: linear-gradient(to top right, #a5b1ba 50%, #fff 50%);
`;
const NameField = styled.input`
  flex: 1;
  min-width: 0;
  height: 22px;
  padding: 0 4px 2px;
  border: 1px solid;
  border-width: 2px 1px 1px 2px;
  border-color: #777 #fff #fff #777;
  background: #f1f1f1;
  font-size: 12px;
  &::placeholder { color: #858585; }
`;
const MaterialActions = styled.div`
  display: flex;
  flex-direction: column;
  align-items: center;
  gap: 4px;
  width: 28px;
  padding-top: 3px;
`;
const IconButton = styled.button`
  display: grid;
  place-items: center;
  flex: none;
  width: 28px;
  height: 32px;
`;
const Tabs = styled.div`
  display: flex;
  align-items: flex-end;
  height: 31px;
  padding-right: 3px;
`;
const Tab = styled.button<{ $on?: boolean }>`
  width: ${(p) => (p.$on ? 51 : 46)}px;
  height: ${(p) => (p.$on ? 23 : 21)}px;
  padding: 0 0 3px ${(p) => (p.$on ? 7 : 4)}px;
  border-top: 1px solid #fff;
  border-left: 1px solid #fff;
  border-right: 2px solid #666;
  text-align: left;
  font-size: 12px;
  line-height: 16px;
`;
const NavRow = styled.div`
  display: flex;
  align-items: flex-start;
  height: 35px;
  border-bottom: 1px solid #9c9c9c;
  padding-left: 1px;
`;
const SelectBox = styled.label`
  display: flex;
  width: 156px;
  height: 26px;
  margin: 6px 2px 0 1px;
  border: 1px solid;
  border-width: 2px 1px 1px 2px;
  border-color: #777 #ddd #ddd #777;
  background: #fff;
`;
const Select = styled.select<{ $focus?: boolean }>`
  appearance: none;
  flex: 1;
  margin: 0 4px 1px 3px;
  padding: 0;
  border: 0;
  border-bottom: 1px solid ${(p) => (p.$focus ? "#000" : "transparent")};
  background: none;
  font-size: 12px;
`;
const SelectArrow = styled.span`
  display: grid;
  place-items: center;
  width: 20px;
  border: 1px solid;
  border-color: #eee #555 #555 #eee;
  background: #f1f1f1;
`;
const ListRow = styled.div<{ $h: number }>`
  display: flex;
  height: ${(p) => p.$h}px;
  background: #fff;
  overflow: hidden;
`;
const Swatches = styled.div`
  display: grid;
  grid-template-columns: repeat(3, 62px);
  grid-auto-rows: 62px;
  align-content: start;
  gap: 2px;
  flex: 1;
  padding: 2px 3px;
`;
const Swatch = styled.button<{ $c: string }>`
  border: 1px solid #8f8f8f;
  padding: 1px;
  background: ${(p) => p.$c} content-box;
  svg { margin: 0 auto; }
`;
const Bar = styled.div<{ $thumb: number }>`
  display: flex;
  flex-direction: column;
  align-items: center;
  flex: none;
  width: 21px;
  padding: 6px 0;
  background: #f1f1f1;
  &::before {
    content: "";
    order: 1;
    flex: none;
    width: 19px;
    height: ${(p) => p.$thumb}px;
    margin-top: 5px;
    background: #cdcdcd;
  }
  svg:last-child { order: 2; margin-top: auto; }
  svg:first-child { order: 0; margin-top: 0; flex: none; }
`;
const Band = styled.div`
  height: 23px;
  margin-top: 3px;
  padding-left: 4px;
  border-top: 1px solid #9c9c9c;
  border-bottom: 1px solid #9c9c9c;
  background: #e4e4e4;
  font-size: 12px;
  line-height: 20px;
`;
const SplitBar = styled.div`
  height: 5px;
  border-bottom: 2px solid #777;
`;

/* ---------- status bar ---------- */

const Status = styled.footer`
  display: flex;
  align-items: center;
  flex: none;
  height: 29px;
  padding: 2px 5px 0 6px;
  background: #f1f1f1;
  border-top: 1px solid #c8c8c8;
  font-size: 16px;
`;
const StatusIcons = styled.div`
  display: flex;
  gap: 15px;
  padding-right: 12px;
`;
const StatusText = styled.span`
  flex: 1;
  margin: 0 12px 0 0;
  padding-left: 10px;
  border-left: 1px solid #999;
  border-right: 1px solid #999;
  line-height: 18px;
  font-size: 17px;
`;
const Measure = styled.label`
  display: flex;
  align-items: center;
  gap: 10px;
  line-height: 24px;
`;
const MeasureInput = styled.input`
  width: 250px;
  height: 24px;
  border: 1px solid #a9b8c9;
  background: #fff;
`;

const Caret = ({ w = 12, h = 6 }: { w?: number; h?: number }) => (
  <svg width={w} height={h} viewBox="0 0 12 6" preserveAspectRatio="none"><path d="M0 0 H12 L6 6 Z" fill="#000" /></svg>
);
const Chevron = ({ up }: { up?: boolean }) => (
  <svg width="10" height="10" viewBox="0 0 10 10"><path d={up ? "M1 7 L5 3 L9 7" : "M1 3 L5 7 L9 3"} fill="none" stroke="#505050" strokeWidth="2" /></svg>
);
const Cross = ({ color = "#222" }: { color?: string }) => (
  <svg width="6" height="6" viewBox="0 0 6 6"><path d="M0 0 L6 6 M6 0 L0 6" stroke={color} strokeWidth="1.5" /></svg>
);

const Tools = ({ names }: { names: string[] }) => (
  <>{names.map((n) => <Tool key={n} aria-label={n}><Icon name={n} /></Tool>)}</>
);
const SplitTool = ({ name, on }: { name: string; on?: boolean }) => (
  <Split $on={on}>
    <SplitMain aria-label={name}><Icon name={name} /></SplitMain>
    <SplitArrow $on={on} aria-label={`${name} options`}><Caret /></SplitArrow>
  </Split>
);
const Section = ({ title }: { title: string }) => (
  <SectionHead>
    <HeadToggle><Caret w={9} h={9} />{title}</HeadToggle>
    <Grow />
    <HeadClose aria-label="close"><Cross /></HeadClose>
  </SectionHead>
);
const FlipIcon = ({ up }: { up?: boolean }) => (
  <Flip $up={up} aria-label="toggle">
    <svg width="10" height="8" viewBox="0 0 10 8"><path d={up ? "M1 6 H9 L5 2 Z" : "M1 2 H9 L5 6 Z"} /></svg>
    <svg width="10" height="8" viewBox="0 0 10 8"><path d={up ? "M2 4 H8" : "M2 4 H8 M5 1 V7"} stroke="#fff" strokeWidth="1.5" /></svg>
  </Flip>
);
const Navigator = ({ value, focus }: { value: string; focus?: boolean }) => (
  <NavRow>
    <IconButton aria-label="back"><Icon name="prev" size={32} /></IconButton>
    <IconButton aria-label="forward"><Icon name="next" size={32} /></IconButton>
    <IconButton aria-label="home"><Icon name="home" size={32} /></IconButton>
    <SelectBox>
      <Select $focus={focus} defaultValue={value} aria-label={value}><option>{value}</option></Select>
      <SelectArrow><Caret w={9} h={5} /></SelectArrow>
    </SelectBox>
    <IconButton aria-label="details"><Icon name="details" size={32} /></IconButton>
  </NavRow>
);

const toolSets = [
  ["select", "component", "bucket", "eraser"],
  ["pencil", "freehand", "rectangle", "rotrect", "circle", "polygon", "arc", "arc2", "arc3", "pie"],
  ["move", "push", "rotate", "follow", "scale", "offset"],
  ["tape", "dimension", "protractor", "label", "axes", "text3d"],
  ["orbit", "hand", "lens", "zoomwin", "extents", "previous"],
  ["camera", "eye", "walk", "section"],
];
const colors = [
  "#fbcfcf", "#f99b9b", "#f56565", "#f13434", "#ec0303", "#cc0202",
  "#9b0205", "#690205", "#fddccf", "#f9b49b", "#f99168", "#f66a35",
  "#ef4207", "#cf3609", "#992808", "#671b05", "#fee6cf", "#fbce9b",
];
const menus = ["파일(F)", "편집(E)", "보기(V)", "카메라(C)", "그리기(R)", "도구(T)", "창(W)", "도움말(H)"];

export default function App() {
  return (
    <Page>
      <Global />
      <MenuBar>{menus.map((m) => <MenuItem key={m}>{m}</MenuItem>)}</MenuBar>

      <Toolbar>
        <Group>
          <Grip />
          <Tools names={["select"]} />
          <Divider />
          <Tools names={["eraser"]} />
          <SplitTool name="pencil" />
          <SplitTool name="arc2" />
          <SplitTool name="circle" on />
          <Divider />
          <Tools names={["push", "offset", "move", "rotate", "scale"]} />
          <Divider />
          <Tools names={["tape", "label", "bucket"]} />
          <Divider />
          <Tools names={["orbit", "hand", "lens", "extents"]} />
          <Divider />
          <Tools names={["warehouse", "extwarehouse", "layout"]} />
          <Divider />
          <Tools names={["extmanager"]} />
        </Group>
        <Group><Grip /><Tools names={["house", "top", "front", "right", "back", "left"]} /></Group>
        <Group><Grip /><Tools names={["outer"]} /><Divider /><Tools names={["intersect", "union", "subtract", "trim", "split"]} /></Group>
        <ShadowBar>
          <Grip />
          <Tools names={["shadow"]} />
          <ShadowPanel>
            <RangeBlock>
              <Range type="range" min="0" max="100" defaultValue="86" aria-label="month" $track="#fffbe8, #f5b81e 33%, #e9140f 66%, #f6b0b6 88%, #fdeff0" />
              <Ticks>{"JFMAMJJASOND".split("").map((m, i) => <span key={i}>{m}</span>)}</Ticks>
            </RangeBlock>
            <RangeBlock>
              <Range type="range" min="0" max="100" defaultValue="63" aria-label="time" $track="#fff, #9fc4de 30%, #5d6ce8 66%, #14142e 95%, #000" />
              <Times><span>07:08</span><span>정오</span><span>17:22</span></Times>
            </RangeBlock>
          </ShadowPanel>
        </ShadowBar>
      </Toolbar>

      <Workspace>
        <ToolBox>
          <ToolGrid>
            <Grip $wide />
            {toolSets.map((set) => (
              <ToolSet key={set[0]}>
                {set.map((n) => <Tool key={n} $on={n === "circle"} aria-label={n}><Icon name={n} /></Tool>)}
              </ToolSet>
            ))}
          </ToolGrid>
        </ToolBox>

        <Viewport>
          <Scene viewBox="90 114 1528 894" preserveAspectRatio="xMidYMid slice">
            <defs>
              <linearGradient id="sky" x1="0" y1="0" x2="0" y2="1">
                <stop offset="0" stopColor="#d4dade" /><stop offset="1" stopColor="#f0f2f3" />
              </linearGradient>
            </defs>
            <rect x="90" y="114" width="1528" height="894" fill="#cececc" />
            <rect x="90" y="114" width="1528" height="88" fill="url(#sky)" />
            <path d="M90 771 L1618 275" stroke="#2da02f" />
            <path d="M90 797 L591 1008" stroke="#b01c22" />
            <polygon
              points="796,603 862,606 927,615 982,629 1028,647 1061,669 1077,695 1073,724 1044,753 989,781 914,802 815,816 707,818 617,810 534,792 477,766 447,738 442,709 461,680 497,656 546,635 599,621 664,610 735,604"
              fill="#646b73" stroke="#000" strokeWidth="2.5"
            />
            <ellipse cx="1007" cy="872" rx="25" ry="11.5" fill="none" stroke="#1d1db0" transform="rotate(3 1007 872)" />
            <g transform="translate(1005 848) scale(.78)">{pencil}</g>
          </Scene>
          <KeyLog>{[0, 1, 2, 3].map((i) => <KeyBadge key={i} $level={i}>&lt;MouseWheel&gt;</KeyBadge>)}</KeyLog>
        </Viewport>

        <Tray>
          <TrayTitle>
            기본 트레이
            <Grow />
            <svg width="8" height="10" viewBox="0 0 8 10"><path d="M2 1 H6 V6 M2 1 V6 M0 6.5 H8 M4 6 V10 M5.5 1 V6" stroke="#000" strokeWidth="1.3" fill="none" /></svg>
            <TrayClose aria-label="close tray"><Cross color="#fff" /></TrayClose>
          </TrayTitle>
          <TrayBody>
            <Sections>
              <Section title="요소 정보" />
              <Info><InfoText>선택 없음</InfoText><FlipBox><FlipIcon /></FlipBox></Info>
              <Section title="재질" />
              <MaterialHead>
                <Preview><Fold /></Preview>
                <NameField placeholder="기본값" aria-label="material name" />
                <MaterialActions>
                  <FlipIcon up />
                  <IconButton aria-label="create material"><Icon name="addmat" size={32} /></IconButton>
                  <Fold $small />
                </MaterialActions>
              </MaterialHead>
              <Tabs>
                <Tab $on>선택</Tab><Tab>편집</Tab><Grow />
                <IconButton aria-label="sample"><Icon name="dropper" size={32} /></IconButton>
              </Tabs>
              <Navigator value="색상" />
              <ListRow $h={382}>
                <Swatches>{colors.map((c) => <Swatch key={c} $c={c} aria-label={c} />)}</Swatches>
                <Bar $thumb={21}><Chevron up /><Chevron /></Bar>
              </ListRow>
              <SplitBar />
              <Band>선택</Band>
              <Navigator value="재질" focus />
              <ListRow $h={66}>
                <Swatches>
                  {[0, 1, 2].map((i) => (
                    <Swatch key={i} $c="#fff" aria-label="folder">
                      <svg width="36" height="34" viewBox="0 0 36 34">
                        <path d="M1 5 L9 2 L12 4 L33 1 L30 32 L4 33 Z" fill="#7fb2da" stroke="#4a4a4a" />
                        <path d="M6 10 L35 2 L32 33 L7 33 Z" fill="#b09468" stroke="#4a4a4a" />
                      </svg>
                    </Swatch>
                  ))}
                </Swatches>
                <Bar $thumb={40}><Chevron up /></Bar>
              </ListRow>
            </Sections>
            <Bar $thumb={21}><Chevron up /><Chevron /></Bar>
          </TrayBody>
        </Tray>
        <Shade />
      </Workspace>

      <Status>
        <StatusIcons>
          <svg width="20" height="20" viewBox="0 0 20 20"><circle cx="10" cy="10" r="8.5" fill="none" stroke="#a3a3a3" strokeWidth="1.4" /><path d="M10 16 L6.5 8 A3.6 3.6 0 1 1 13.5 8 Z" fill="#999" /></svg>
          <svg width="20" height="20" viewBox="0 0 20 20"><circle cx="10" cy="10" r="8.3" fill="none" stroke="#111" strokeWidth="1.8" /><circle cx="10" cy="5.5" r="1.8" /><path d="M8 8 H12 V12 H11 V16 H9 V12 H8 Z" /></svg>
          <svg width="20" height="20" viewBox="0 0 20 20"><circle cx="10" cy="10" r="8.5" fill="#e2e2e2" stroke="#a3a3a3" strokeWidth="1.4" /><circle cx="10" cy="7.5" r="3.8" fill="#999" /><path d="M3.5 15 Q10 9 16.5 15 Q10 21 3.5 15 Z" fill="#999" /></svg>
        </StatusIcons>
        <StatusText>중심점을 선택하십시오. Ctrl '+' 또는 Ctrl '-'를 사용해 조각 수를 변경합니다.</StatusText>
        <Measure>반경<MeasureInput type="text" /></Measure>
      </Status>
    </Page>
  );
}
